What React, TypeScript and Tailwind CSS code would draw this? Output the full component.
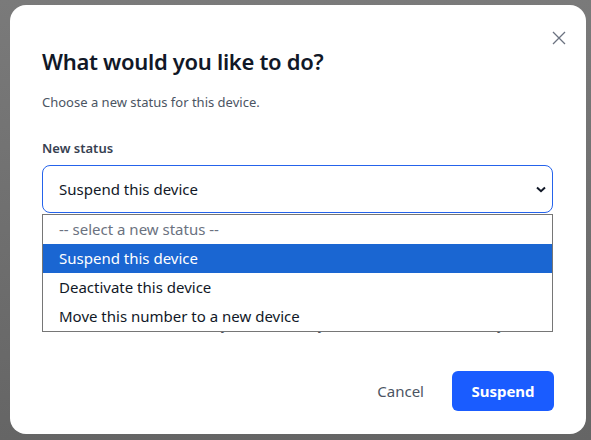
import React from "react";

export default function App() {
  const font = { fontFamily: '"Noto Sans", "Open Sans", sans-serif' };
  return (
    <div
      className="w-[591px] h-[440px] bg-gradient-to-b from-[#7a7a7a] to-[#656565] pt-[5px] pl-[10px] overflow-hidden"
      style={font}
    >
      <div className="relative w-[576px] h-[429px] bg-white rounded-[16px] px-[32px] pt-[41px] flex flex-col">
        <button className="absolute right-[20px] top-[26px] w-[14px] h-[14px] text-[#6b7280]">
          <svg viewBox="0 0 14 14" className="w-[14px] h-[14px]" fill="none" stroke="currentColor" strokeWidth="1.3">
            <path d="M1 1 L13 13 M13 1 L1 13" />
          </svg>
        </button>
        <h1 className="text-[22px] leading-[30px] font-semibold text-[#111827] tracking-[-0.3px]">
          What would you like to do?
        </h1>
        <p className="mt-[17px] text-[13px] leading-[18px] text-[#4b5563]">
          Choose a new status for this device.
        </p>
        <label className="mt-[28px] text-[13px] leading-[18px] font-semibold text-[#374151]">
          New status
        </label>
        <div className="relative mt-[8px]">
          <div className="h-[48px] w-[511px] border border-[#2563eb] rounded-[8px] flex items-center justify-between pl-[16px] pr-[6px] text-[15px] text-[#111827]">
            <span>Suspend this device</span>
            <svg viewBox="0 0 10 7" className="w-[10px] h-[7px]" fill="none" stroke="#111827" strokeWidth="2">
              <path d="M1 1.5 L5 5.2 L9 1.5" />
            </svg>
          </div>
          <p className="mt-[103px] pl-[104px] text-[13px] leading-[18px] text-[#4b5563]">
            Your line stays on hold until you reactivate it later on today.
          </p>
          <div className="absolute left-0 top-[49px] w-[511px] border border-[#767676] bg-white z-10 text-[15px]">
            <div className="h-[29px] flex items-center pl-[16px] text-[#6b7280]">-- select a new status --</div>
            <div className="h-[29px] flex items-center pl-[16px] bg-[#1a66d2] text-white">Suspend this device</div>
            <div className="h-[29px] flex items-center pl-[16px] text-[#111827]">Deactivate this device</div>
            <div className="h-[29px] flex items-center pl-[16px] text-[#111827]">Move this number to a new device</div>
          </div>
        </div>
        <div className="mt-auto mb-[23px] flex justify-end items-center gap-[28px] pr-0">
          <button className="text-[15px] text-[#4b5563]">Cancel</button>
          <button className="h-[40px] w-[102px] rounded-[6px] bg-[#1a5cff] text-white text-[15px] font-bold">
            Suspend
          </button>
        </div>
      </div>
    </div>
  );
}
